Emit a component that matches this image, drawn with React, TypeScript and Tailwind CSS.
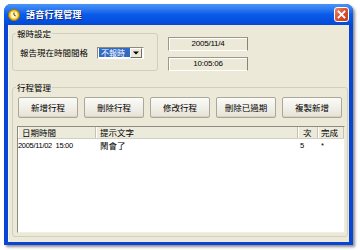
import React from 'react';

const App = () => {
  const buttons = ['新增行程', '刪除行程', '修改行程', '刪除已過期', '複製新增'];
  const columns = [
    { label: '日期時間', width: 'w-[78px]', pad: 'pl-[4px]' },
    { label: '提示文字', width: 'w-[202px]', pad: 'pl-[4px]' },
    { label: '次', width: 'w-[20px]', pad: 'pl-[5px]' },
    { label: '完成', width: 'w-[26px]', pad: 'pl-[3px]' },
  ];

  return (
    <div className="w-[360px] h-[250px] bg-white pt-[4px] pl-[4px] font-['Noto_Sans_CJK_TC',sans-serif] text-[8.5px] text-black leading-none">
      <div className="w-[349px] h-[241px] rounded-t-[7px] bg-[#0845d4] flex flex-col shadow-[2px_2px_3px_rgba(0,0,0,0.45)]">
        {/* Title bar */}
        <div className="h-[21px] flex items-center rounded-t-[7px] bg-gradient-to-b from-[#4a94f7] via-[#0a5be9] to-[#0349d6]">
          <svg className="ml-[4px] w-[12px] h-[12px]" viewBox="0 0 12 12">
            <circle cx="6" cy="6" r="5.5" fill="#f5c518" stroke="#a57400" strokeWidth="1" />
            <circle cx="6" cy="6" r="3.4" fill="#fff6c4" />
            <path d="M6 3.5V6L7.8 7" stroke="#5a3a00" strokeWidth="1" fill="none" />
          </svg>
          <span className="ml-[6px] text-white font-bold text-[9px] tracking-[0.3px] [text-shadow:1px_1px_0_#0a2a8a]">語音行程管理</span>
          <div className="flex-1" />
          <div className="mr-[4px] w-[15px] h-[15px] rounded-[3px] border border-white bg-gradient-to-br from-[#e98a6c] via-[#d9502c] to-[#c23a18] flex items-center justify-center">
            <svg className="w-[9px] h-[9px]" viewBox="0 0 9 9">
              <path d="M1.5 1.5L7.5 7.5M7.5 1.5L1.5 7.5" stroke="white" strokeWidth="1.8" strokeLinecap="square" />
            </svg>
          </div>
        </div>

        {/* Body */}
        <div className="flex-1 px-[4px] pb-[3px]">
          <div className="h-full bg-[#ece9d8] pl-[4px] pr-[1px] pt-[3px] shadow-[inset_1px_0_0_#f5f3ea]">
            {/* Top section */}
            <div className="flex">
              <fieldset className="w-[146px] h-[43px] border border-[#d0d0bf] rounded-[3px]">
                <legend className="ml-[3px] px-[1px] leading-[10px]">報時設定</legend>
                <div className="h-[32px] flex items-center pb-[3px]">
                  <span className="ml-[7px] w-[77px]">報告現在時間間格</span>
                  <div className="w-[47px] h-[12px] border border-[#8d8a7e] border-b-white border-r-white bg-white flex items-center">
                    <span className="ml-[1px] w-[31px] h-[9px] bg-[#316ac5] text-white flex items-center pl-[2px] text-[8px]">不報時</span>
                    <div className="ml-auto mr-[1px] w-[12px] h-[10px] bg-[#ece9d8] border border-white border-r-[#716f64] border-b-[#716f64] flex items-center justify-center">
                      <svg className="w-[6px] h-[4px]" viewBox="0 0 6 4">
                        <path d="M0 0.5H6L3 3.5Z" fill="black" />
                      </svg>
                    </div>
                  </div>
                </div>
              </fieldset>
              <div className="ml-[10px] mt-[9px] flex flex-col gap-[6px] font-['Liberation_Sans',sans-serif] text-[8px] tracking-[-0.2px]">
                <div className="w-[80px] h-[14px] border border-[#9b9889] border-b-white border-r-[#86847a] shadow-[inset_1px_1px_0_#ffffff] flex items-center justify-center">2005/11/4</div>
                <div className="w-[80px] h-[14px] border border-[#9b9889] border-b-white border-r-[#86847a] shadow-[inset_1px_1px_0_#ffffff] flex items-center justify-center">10:05:06</div>
              </div>
            </div>

            {/* Schedule group */}
            <fieldset className="mt-[11px] w-[336px] h-[155px] border border-[#d0d0bf] rounded-[3px]">
              <legend className="ml-[3px] px-[1px] leading-[10px]">行程管理</legend>
              <div className="mt-[5px] ml-[5px] w-[324px] grid grid-cols-5 gap-[6px]">
                {buttons.map((b, i) => (
                  <div
                    key={i}
                    className="h-[21px] rounded-[2px] border border-[#aca899] bg-gradient-to-b from-[#fbfbf8] to-[#e6e3d7] shadow-[inset_0_-1px_0_#d6d2c3] flex items-center justify-center"
                  >
                    {b}
                  </div>
                ))}
              </div>
              <div className="mt-[8px] ml-[4px] w-[328px] h-[107px] border border-[#8d8a7e] border-b-[#f0eee6] border-r-[#f0eee6] bg-white">
                <div className="flex h-[12px] bg-[#ebeadb] border-b border-[#d2cfbf]">
                  {columns.map((c, i) => (
                    <div key={i} className={`${c.width} ${c.pad} h-full flex items-center border-r border-[#c5c2b2] shadow-[inset_1px_0_0_#ffffff]`}>
                      {c.label}
                    </div>
                  ))}
                </div>
                <div className="flex h-[11px] mt-[1px] items-center">
                  <div className="w-[78px] font-['Liberation_Sans',sans-serif] text-[7.5px] tracking-[-0.3px] whitespace-pre">2005/11/02  15:00</div>
                  <div className="w-[202px] pl-[4px]">鬧會了</div>
                  <div className="w-[20px] pl-[2px] font-['Liberation_Sans',sans-serif] text-[7.5px]">5</div>
                  <div className="w-[26px] pl-[3px] font-['Liberation_Sans',sans-serif] text-[7.5px]">*</div>
                </div>
              </div>
            </fieldset>
          </div>
        </div>
      </div>
    </div>
  );
};

export default App;
